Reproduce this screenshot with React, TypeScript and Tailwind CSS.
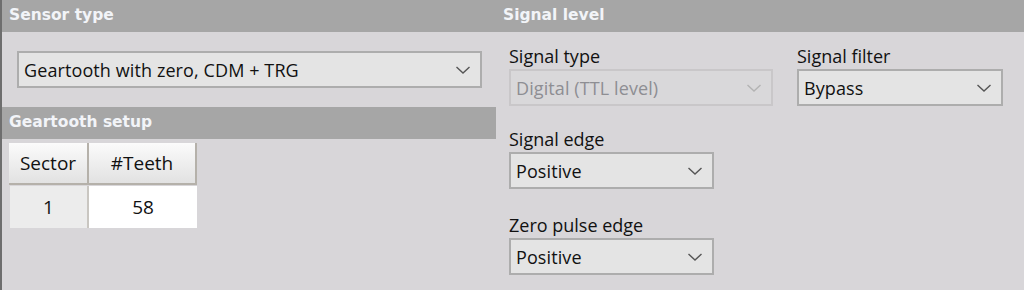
import React from "react";

const FONT = { fontFamily: '"Open Sans", "Noto Sans", sans-serif' };
const HEAD_FONT = { fontFamily: '"DejaVu Sans", Verdana, sans-serif' };

type ComboProps = {
  value: string;
  width: string;
  disabled?: boolean;
};

const Chevron: React.FC<{ color: string }> = ({ color }) => (
  <svg width="16" height="10" viewBox="0 0 16 10" fill="none">
    <polyline points="1.5,2 8,8 14.5,2" stroke={color} strokeWidth="1.4" />
  </svg>
);

const Combo: React.FC<ComboProps> = ({ value, width, disabled }) => {
  return (
    <div
      className={`${width} flex h-[37px] items-center justify-between border-2 pl-[5px] pr-[9px] text-[18px] tracking-[0.1px] ${
        disabled
          ? "border-[#c9c7c9] bg-[#d9d8da] text-[#8e8e93]"
          : "border-[#adadad] bg-[#e4e4e4] text-[#111]"
      }`}
      style={FONT}
    >
      <span className="leading-none">{value}</span>
      <Chevron color={disabled ? "#b3b3b3" : "#555"} />
    </div>
  );
};

const Header: React.FC<{ title: string; width?: string }> = ({ title, width }) => (
  <div
    className={`${width ?? "w-full"} flex h-8 items-center bg-[#a6a6a6] pl-[7px] text-[15.5px] font-bold text-[#f2f4f8]`}
    style={HEAD_FONT}
  >
    {title}
  </div>
);

const Field: React.FC<{ label: string; children: React.ReactNode }> = ({ label, children }) => (
  <div className="flex flex-col">
    <div className="h-[25px] text-[18px] leading-[25px] text-[#111]" style={FONT}>
      {label}
    </div>
    {children}
  </div>
);

const GearTable: React.FC = () => {
  return (
    <div className="ml-[7px] mt-1 flex flex-col text-[19px] text-[#111]" style={FONT}>
      <div className="flex">
        <div className="flex h-[42px] w-[80px] items-center justify-center border-r-2 border-b-2 border-[#b5b1aa] bg-gradient-to-b from-[#fbfbfb] to-[#e2e2e2]">
          Sector
        </div>
        <div className="flex h-[42px] w-[108px] items-center justify-center border-r-2 border-b-2 border-[#b5b1aa] bg-gradient-to-b from-[#fbfbfb] to-[#e2e2e2]">
          #Teeth
        </div>
      </div>
      <div className="mt-px flex">
        <div className="ml-px flex h-[42px] w-[79px] items-center justify-center border-r-2 border-[#c9c6c1] bg-[#ececec]">
          1
        </div>
        <div className="flex h-[42px] w-[108px] items-center justify-center bg-white">58</div>
      </div>
    </div>
  );
};

export default function App() {
  return (
    <div className="flex h-[290px] w-[1024px] overflow-hidden border-l-2 border-[#6e6e6e] bg-[#d8d6d9]">
      <div className="flex w-[494px] flex-col">
        <Header title="Sensor type" />
        <div className="pl-[15px] pt-[19px]">
          <Combo value="Geartooth with zero, CDM + TRG" width="w-[465px]" />
        </div>
        <div className="mt-[19px]">
          <Header title="Geartooth setup" />
        </div>
        <GearTable />
      </div>
      <div className="flex flex-1 flex-col">
        <Header title="Signal level" />
        <div className="flex pl-[13px] pt-[12px]">
          <div className="flex w-[288px] flex-col">
            <Field label="Signal type">
              <Combo value="Digital (TTL level)" width="w-[264px]" disabled />
            </Field>
            <div className="mt-[21px]">
              <Field label="Signal edge">
                <Combo value="Positive" width="w-[205px]" />
              </Field>
            </div>
            <div className="mt-[24px]">
              <Field label="Zero pulse edge">
                <Combo value="Positive" width="w-[205px]" />
              </Field>
            </div>
          </div>
          <div className="flex flex-col">
            <Field label="Signal filter">
              <Combo value="Bypass" width="w-[206px]" />
            </Field>
          </div>
        </div>
      </div>
    </div>
  );
}
